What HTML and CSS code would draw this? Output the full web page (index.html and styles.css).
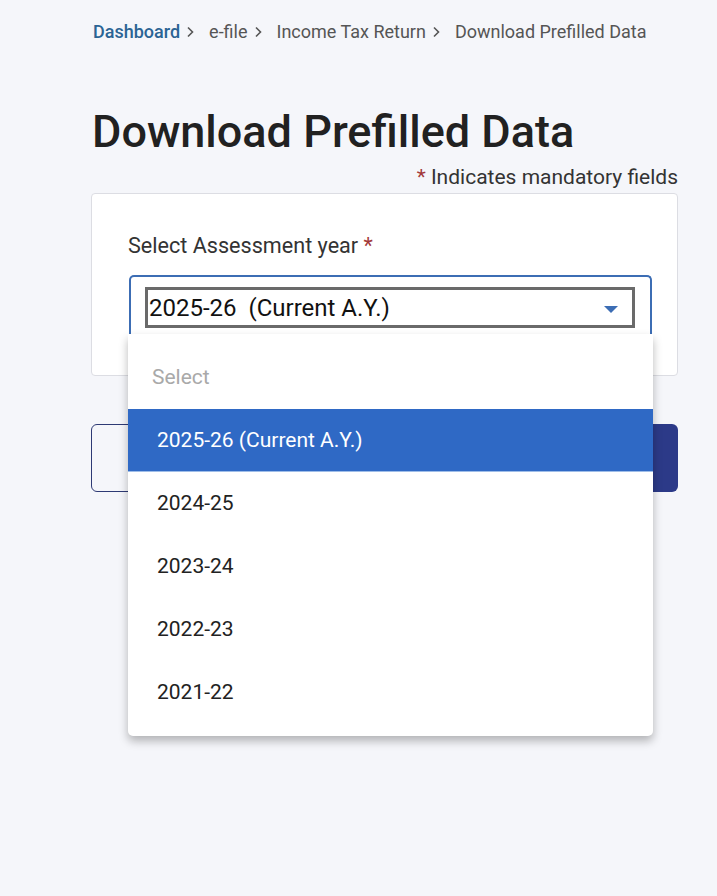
FILE: index.html
```html
<!DOCTYPE html>
<html lang="en">
<head>
  <meta charset="UTF-8" />
  <title>Download Prefilled Data</title>
  <link rel="stylesheet" href="styles.css">
</head>
<body>
  <div class="page">
    <nav class="crumbs">
      <a class="crumb crumb-link">Dashboard</a>
      <svg class="chev" viewBox="0 0 8 12"><path d="M2 1.5l4.5 4.5-4.5 4.5" /></svg>
      <span class="crumb">e-file</span>
      <svg class="chev" viewBox="0 0 8 12"><path d="M2 1.5l4.5 4.5-4.5 4.5" /></svg>
      <span class="crumb">Income Tax Return</span>
      <svg class="chev" viewBox="0 0 8 12"><path d="M2 1.5l4.5 4.5-4.5 4.5" /></svg>
      <span class="crumb">Download Prefilled Data</span>
    </nav>

    <h1 class="title">Download Prefilled Data</h1>
    <p class="mandatory"><span class="req">*</span> Indicates mandatory fields</p>

    <div class="card">
      <label class="field-label">Select Assessment year <span class="req">*</span></label>
      <div class="select-wrap">
        <div class="select">
          <div class="select-focus">
            <span class="select-value">2025-26&nbsp; (Current A.Y.)</span>
            <svg class="caret" viewBox="0 0 14 8"><path d="M0 0h14L7 7z" /></svg>
          </div>
        </div>

        <!-- open option list -->
        <ul class="options">
          <li class="option placeholder">Select</li>
          <li class="option selected">2025-26 (Current A.Y.)</li>
          <li class="option">2024-25</li>
          <li class="option">2023-24</li>
          <li class="option">2022-23</li>
          <li class="option">2021-22</li>
        </ul>
      </div>
    </div>

    <div class="actions">
      <button class="btn btn-outline"></button>
      <button class="btn btn-fill"></button>
    </div>
  </div>
</body>
</html>
```

FILE: styles.css
```css
body {
  margin: 0;
  background: #f5f6fa;
  font-family: Roboto, "Liberation Sans", sans-serif;
  color: #222;
  height: 896px;
  overflow: hidden;
}

.page {
  margin-left: 91px;
  width: 587px;
  padding-top: 20px;
}

.crumbs {
  display: flex;
  align-items: center;
  padding-left: 2px;
  font-size: 18px;
  line-height: 24px;
  color: #555;
}

.crumb-link {
  color: #2b6494;
  font-weight: 500;
}

.chev {
  width: 8px;
  height: 12px;
  margin: 0 15px 0 6px;
  fill: none;
  stroke: #555;
  stroke-width: 1.6;
}

.title {
  margin: 60px 0 0 1px;
  font-size: 45px;
  line-height: 56px;
  font-weight: 500;
  color: #212121;
}

.mandatory {
  margin: 5px 0 0;
  text-align: right;
  font-size: 21px;
  line-height: 24px;
  color: #333;
}

.req {
  color: #a33a3a;
}

.card {
  margin-top: 4px;
  background: #fff;
  border: 1px solid #dcdde3;
  border-radius: 4px;
  padding: 40px 25px 30px 36px;
}

.field-label {
  display: block;
  font-size: 21.6px;
  line-height: 24px;
  color: #333;
}

.select-wrap {
  position: relative;
  margin-top: 17px;
}

.select {
  height: 58px;
  border: 2px solid #3c6db4;
  border-bottom: none;
  border-radius: 5px 5px 0 0;
  margin-left: 1px;
  padding: 10px 15px 0 14px;
}

.select-focus {
  height: 35px;
  border: 3px solid #6a6a6a;
  display: flex;
  align-items: center;
  justify-content: space-between;
  padding: 0 14px 0 1px;
}

.select-value {
  font-size: 24px;
  color: #111;
}

.caret {
  width: 14px;
  height: 8px;
  fill: #3c6db4;
  margin-top: 4px;
}

.options {
  position: absolute;
  left: 0;
  right: -1px;
  top: 59px;
  margin: 0;
  padding: 0 0 12px;
  list-style: none;
  background: #fff;
  border-radius: 0 0 5px 5px;
  box-shadow: 0 5px 10px rgba(0, 0, 0, 0.28);
  z-index: 2;
}

.option {
  height: 63px;
  line-height: 63px;
  padding-left: 29px;
  font-size: 21px;
  color: #222;
}

.placeholder {
  height: 75px;
  line-height: 86px;
  padding-left: 24px;
  color: #a9a9a9;
}

.selected {
  background: #2f69c5;
  color: #fff;
  border-bottom: 1px solid #9ebde8;
  height: 62px;
}

.actions {
  display: flex;
  justify-content: space-between;
  margin-top: 48px;
}

.btn {
  width: 250px;
  height: 68px;
  border-radius: 6px;
  cursor: pointer;
}

.btn-outline {
  background: transparent;
  border: 1.5px solid #2e3a74;
}

.btn-fill {
  background: #2c3a88;
  border: none;
}
```
